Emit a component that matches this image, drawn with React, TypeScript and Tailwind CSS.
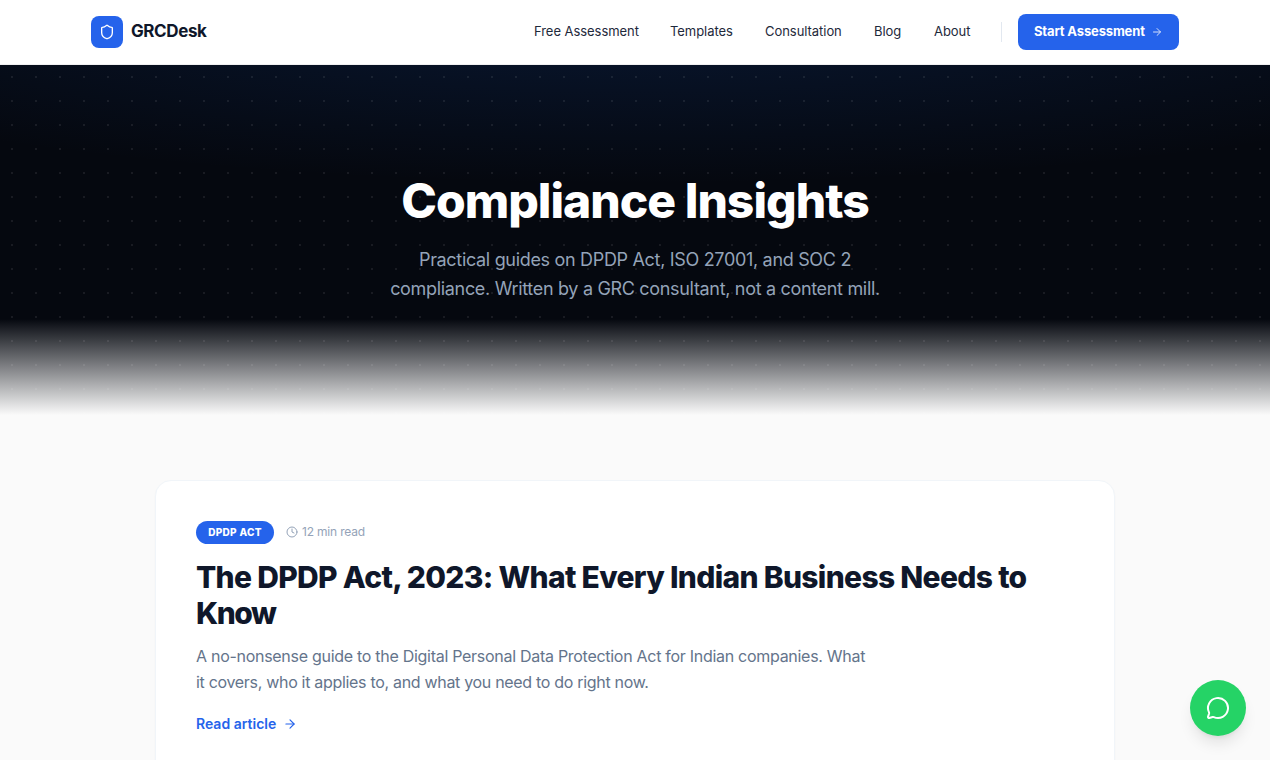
import { ArrowRight, Clock, MessageCircle, Shield } from "lucide-react";

const links = [
  { label: "Free Assessment", style: "w-[104px]" },
  { label: "Templates", style: "w-[63px]" },
  { label: "Consultation", style: "w-[77px]" },
  { label: "Blog", style: "w-[28px]" },
  { label: "About", style: "w-[37px]" },
];

function Header() {
  return (
    <header className="h-[65px] border-b border-[#f0f0f1] bg-white">
      <div className="mx-auto flex h-16 w-[1088px] items-center justify-between">
        <a href="#" className="flex items-center gap-2">
          <span className="flex size-8 items-center justify-center rounded-lg bg-[#2563eb] text-white">
            <Shield size={16} strokeWidth={2} />
          </span>
          <span className="text-[17px] font-bold whitespace-nowrap tracking-[-0.4px] text-[#0f172a]">GRCDesk</span>
        </a>
        <div className="flex items-center">
          <nav className="flex gap-8 text-[13px] font-normal whitespace-nowrap tracking-[-0.05px] text-[#1e293b]">
            {links.map((link) => (
              <a key={link.label} href="#" className={link.style}>
                {link.label}
              </a>
            ))}
          </nav>
          <div className="mr-4 ml-[30px] h-5 w-px bg-[#e2e8f0]" />
          <a
            href="#"
            className="flex h-9 w-[161px] items-center gap-1.5 rounded-lg bg-[#2563eb] pl-4 text-[13px] font-bold whitespace-nowrap tracking-[-0.15px] text-white"
          >
            <span className="w-[111px]">Start Assessment</span>
            <ArrowRight size={12} className="shrink-0 opacity-80" />
          </a>
        </div>
      </div>
    </header>
  );
}

function Hero() {
  return (
    <section className="relative h-[350px] bg-[#05080f]">
      <div className="absolute inset-0 bg-[radial-gradient(ellipse_80%_54%_at_50%_-20%,rgba(25,90,200,0.2),transparent)]" />
      <div className="absolute inset-0 bg-[radial-gradient(circle,rgba(255,255,255,0.08)_1px,transparent_1px)] bg-size-[24px_24px]" />
      <div className="absolute inset-x-0 bottom-0 h-24 bg-[linear-gradient(to_top,#fafafa,transparent)]" />
      <div className="relative flex flex-col items-center pt-28 text-center whitespace-nowrap">
        <h1 className="text-[48px] leading-[48px] font-extrabold tracking-[-1px] text-white">Compliance Insights</h1>
        <p className="mt-5 text-[18px] leading-[29px] tracking-[-0.32px] text-[#94a3b8]">
          Practical guides on DPDP Act, ISO 27001, and SOC 2
          <br />
          compliance. Written by a GRC consultant, not a content mill.
        </p>
      </div>
    </section>
  );
}

function FeaturedArticle() {
  return (
    <article className="mx-auto h-[340px] w-[960px] rounded-2xl border border-[#f1f5f9] bg-white p-10 whitespace-nowrap shadow-[0_1px_2px_rgba(0,0,0,0.03)]">
      <div className="flex items-center gap-3">
        <span className="flex h-[23px] w-[78px] items-center justify-center rounded-full bg-[#2563eb] text-[10px] font-extrabold tracking-[0.3px] text-white">
          DPDP ACT
        </span>
        <span className="flex items-center gap-1 pb-0.5 text-[12px] tracking-[-0.18px] text-[#94a3b8]">
          <Clock size={12} />
          12 min read
        </span>
      </div>
      <h2 className="mt-[15px] text-[30px] leading-9 font-extrabold text-[#0f172a]">
        <span className="tracking-[-0.68px]">The DPDP Act, 2023: What Every Indian Business Needs to</span>
        <br />
        <span className="tracking-[-1.5px]">Know</span>
      </h2>
      <p className="mt-3 text-[16px] leading-[26px] tracking-[-0.285px] text-[#64748b]">
        A no-nonsense guide to the Digital Personal Data Protection Act for Indian companies. What
        <br />
        <span className="tracking-[-0.31px]">it covers, who it applies to, and what you need to do right now.</span>
      </p>
      <a href="#" className="mt-[19px] flex items-center gap-[7px] text-[14px] leading-5 font-semibold text-[#2563eb]">
        <span className="w-[80px]">Read article</span>
        <ArrowRight size={14} />
      </a>
    </article>
  );
}

export default function App() {
  return (
    <div className="h-[760px] overflow-hidden bg-[#fafafa] font-['Inter',sans-serif]">
      <Header />
      <Hero />
      <main className="pt-[65px]">
        <FeaturedArticle />
      </main>
      <a
        href="#"
        aria-label="Chat"
        className="fixed right-6 bottom-6 flex size-14 items-center justify-center rounded-full bg-[#25d366] text-white shadow-lg"
      >
        <MessageCircle size={24} strokeWidth={2} />
      </a>
    </div>
  );
}
